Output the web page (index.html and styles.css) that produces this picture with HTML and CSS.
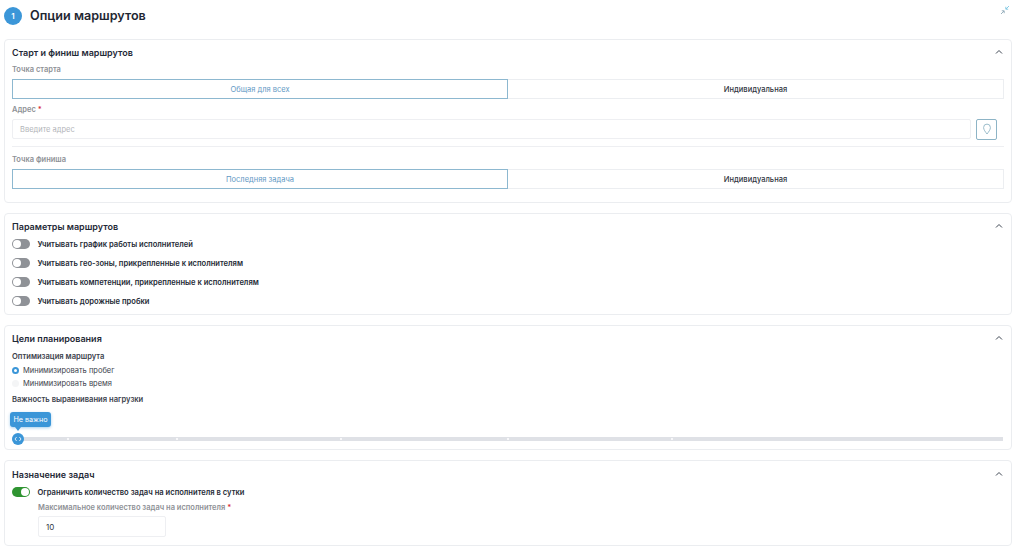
FILE: index.html
```html
<!DOCTYPE html>
<html lang="ru">
<head>
<meta charset="utf-8">
<title>Опции маршрутов</title>
<link rel="stylesheet" href="styles.css">
</head>
<body>
<header class="page-head">
  <span class="step">1</span>
  <h1 class="page-title">Опции маршрутов</h1>
  <svg class="collapse-all" width="10" height="10" viewBox="0 0 10 10" fill="none" stroke-width="0.9">
    <path d="M1 9L4 6M1.8 5.8H4.2V8.2" stroke="#8fa9b8"/>
    <path d="M9 1L6 4M8.2 4.2H5.8V1.8" stroke="#7cc6e2"/>
  </svg>
</header>

<section class="card card-start">
  <div class="card-head">
    <h2 class="card-title">Старт и финиш маршрутов</h2>
    <svg class="chev" width="8" height="6" viewBox="0 0 8 6" fill="none"><path d="M1 4.5L4 1.5L7 4.5" stroke="#3f4753" stroke-width="1"/></svg>
  </div>
  <div class="field-label">Точка старта</div>
  <div class="seg">
    <div class="seg-item active">Общая для всех</div>
    <div class="seg-item">Индивидуальная</div>
  </div>
  <div class="field-label addr-label">Адрес <span class="req">*</span></div>
  <div class="addr-row">
    <div class="input grow placeholder">Введите адрес</div>
    <button class="pin-btn" type="button">
      <svg width="10" height="12" viewBox="0 0 10 12" fill="none"><path d="M5 11C3.4 8.8 1.6 6.8 1.6 4.5A3.4 3.4 0 0 1 8.4 4.5C8.4 6.8 6.6 8.8 5 11Z" stroke="#8fb4c4" stroke-width="0.9"/></svg>
    </button>
  </div>
  <div class="divider"></div>
  <div class="field-label">Точка финиша</div>
  <div class="seg">
    <div class="seg-item active">Последняя задача</div>
    <div class="seg-item">Индивидуальная</div>
  </div>
</section>

<section class="card card-params">
  <div class="card-head">
    <h2 class="card-title">Параметры маршрутов</h2>
    <svg class="chev" width="8" height="6" viewBox="0 0 8 6" fill="none"><path d="M1 4.5L4 1.5L7 4.5" stroke="#3f4753" stroke-width="1"/></svg>
  </div>
  <div class="toggles">
    <div class="toggle-row"><span class="toggle"></span><span class="toggle-text">Учитывать график работы исполнителей</span></div>
    <div class="toggle-row"><span class="toggle"></span><span class="toggle-text">Учитывать гео-зоны, прикрепленные к исполнителям</span></div>
    <div class="toggle-row"><span class="toggle"></span><span class="toggle-text">Учитывать компетенции, прикрепленные к исполнителям</span></div>
    <div class="toggle-row"><span class="toggle"></span><span class="toggle-text">Учитывать дорожные пробки</span></div>
  </div>
</section>

<section class="card card-goals">
  <div class="card-head">
    <h2 class="card-title">Цели планирования</h2>
    <svg class="chev" width="8" height="6" viewBox="0 0 8 6" fill="none"><path d="M1 4.5L4 1.5L7 4.5" stroke="#3f4753" stroke-width="1"/></svg>
  </div>
  <div class="dark-label opt-label">Оптимизация маршрута</div>
  <div class="radios">
    <div class="radio-row"><span class="radio on"></span>Минимизировать пробег</div>
    <div class="radio-row"><span class="radio"></span>Минимизировать время</div>
  </div>
  <div class="dark-label balance-label">Важность выравнивания нагрузки</div>
  <div class="slider">
    <div class="track"></div>
    <span class="tick tick-1"></span>
    <span class="tick tick-2"></span>
    <span class="tick tick-3"></span>
    <span class="tick tick-4"></span>
    <span class="tick tick-5"></span>
    <span class="thumb">
      <svg width="8" height="6" viewBox="0 0 8 6" fill="none"><path d="M2.6 1L1 3L2.6 5M5.4 1L7 3L5.4 5" stroke="#fff" stroke-width="0.8"/></svg>
    </span>
    <span class="tip">Не важно</span>
  </div>
</section>

<section class="card card-tasks">
  <div class="card-head task-head">
    <h2 class="card-title">Назначение задач</h2>
    <svg class="chev" width="8" height="6" viewBox="0 0 8 6" fill="none"><path d="M1 4.5L4 1.5L7 4.5" stroke="#3f4753" stroke-width="1"/></svg>
  </div>
  <div class="toggle-row"><span class="toggle on"></span><span class="toggle-text">Ограничить количество задач на исполнителя в сутки</span></div>
  <div class="nested">
    <div class="field-label">Максимальное количество задач на исполнителя <span class="req">*</span></div>
    <div class="input num">10</div>
  </div>
</section>
</body>
</html>
```

FILE: styles.css
```css
* { box-sizing: border-box; }
html, body { margin: 0; padding: 0; }
body {
  width: 1024px;
  height: 550px;
  overflow: hidden;
  padding: 0 12px 0 4px;
  background: #fff;
  font-family: Inter, "Liberation Sans", sans-serif;
  color: #1f2733;
  display: flex;
  flex-direction: column;
}
.page-head {
  height: 39px;
  flex: none;
  display: flex;
  align-items: flex-start;
  padding-top: 7px;
  position: relative;
}
.step {
  width: 18px;
  height: 18px;
  border-radius: 50%;
  background: #3b96d8;
  color: #fff;
  font-size: 8px;
  font-weight: 600;
  display: flex;
  align-items: center;
  justify-content: center;
  flex: none;
}
.page-title {
  margin: 0 0 0 8px;
  font-size: 12.6px;
  line-height: 18px;
  font-weight: 600;
  color: #1f2733;
}
.collapse-all { position: absolute; right: 2px; top: 5px; }
.card {
  flex: none;
  border: 1px solid #ebedf0;
  border-radius: 4px;
  background: #fff;
  padding: 0 7px;
  margin-bottom: 10px;
}
.card-start { height: 164px; }
.card-params { height: 102px; }
.card-goals { height: 125px; }
.card-tasks { height: 86px; }
.card-head {
  height: 24px;
  display: flex;
  align-items: center;
  justify-content: space-between;
  padding: 1px 1px 0 0;
}
.task-head { height: 25px; }
.chev { margin-top: -1px; }
.card-title {
  margin: 0;
  font-size: 9px;
  font-weight: 600;
  color: #1f2a37;
}
.field-label {
  font-size: 7.5px;
  line-height: 12px;
  font-weight: 600;
  color: #8e9196;
}
.req { color: #d9363e; }
.seg {
  display: flex;
  margin-top: 3px;
  height: 20px;
}
.seg-item {
  flex: 1 1 50%;
  min-width: 0;
  display: flex;
  align-items: center;
  justify-content: center;
  font-size: 7.5px;
  font-weight: 500;
  color: #2f3540;
  border: 1px solid #eceef1;
  border-left-width: 0;
}
.seg-item.active {
  color: #5f98c4;
  font-weight: 400;
  border: 1px solid #8db8d0;
}
.addr-label { margin-top: 5px; }
.addr-row {
  display: flex;
  align-items: center;
  gap: 5px;
  margin-top: 3px;
  height: 20px;
}
.input {
  height: 20px;
  border: 1px solid #eeeff2;
  border-radius: 2px;
  font-size: 7.5px;
  display: flex;
  align-items: center;
  padding: 0 7px;
}
.grow { flex: 1; }
.placeholder { color: #b3b5ba; }
.pin-btn {
  width: 21px;
  height: 21px;
  margin-right: 7px;
  padding: 0;
  background: #fff;
  border: 1px solid #8db4c6;
  border-radius: 2px;
  display: flex;
  align-items: center;
  justify-content: center;
}
.divider {
  height: 1px;
  background: #eeeff2;
  margin: 7px 0 7px;
}
.toggles {
  display: flex;
  flex-direction: column;
  gap: 7px;
}
.toggle-row {
  height: 12px;
  display: flex;
  align-items: center;
  gap: 7.5px;
}
.toggle {
  width: 18px;
  height: 10px;
  border-radius: 5px;
  background: #8f9297;
  position: relative;
  flex: none;
}
.toggle::after {
  content: "";
  position: absolute;
  left: 1px;
  top: 1px;
  width: 8px;
  height: 8px;
  border-radius: 50%;
  background: #fff;
}
.toggle.on { background: #2f9431; }
.toggle.on::after { left: 9px; }
.toggle-text {
  font-size: 7.6px;
  font-weight: 600;
  color: #252b36;
}
.dark-label {
  font-size: 7.6px;
  line-height: 12px;
  font-weight: 600;
  color: #3c424c;
}
.opt-label { margin-top: 1px; }
.radios { margin-top: 1px; }
.radio-row {
  display: flex;
  align-items: center;
  gap: 4px;
  height: 13px;
  font-size: 7.5px;
  color: #3c424c;
}
.radio {
  width: 7px;
  height: 7px;
  border-radius: 50%;
  background: #f4f5f6;
  flex: none;
}
.radio.on {
  background: #fff;
  border: 2px solid #3b96d8;
}
.balance-label { margin-top: 4px; }
.slider {
  position: relative;
  height: 38px;
}
.track {
  position: absolute;
  left: 0;
  right: 1px;
  top: 31px;
  height: 4px;
  background: #dfe1e6;
}
.tick {
  position: absolute;
  top: 32px;
  width: 2px;
  height: 2px;
  background: #f7f7f9;
}
.tick-1 { left: 55px; }
.tick-2 { left: 164px; }
.tick-3 { left: 328px; }
.tick-4 { left: 495px; }
.tick-5 { left: 659px; }
.thumb {
  position: absolute;
  left: 0;
  top: 27px;
  width: 12px;
  height: 12px;
  border-radius: 50%;
  background: #3b96d8;
  display: flex;
  align-items: center;
  justify-content: center;
}
.tip {
  position: absolute;
  left: -2px;
  top: 6px;
  width: 41px;
  height: 15px;
  border-radius: 3px;
  background: #3b96d8;
  color: #fff;
  font-size: 7.2px;
  display: flex;
  align-items: center;
  justify-content: center;
  box-shadow: 0 1px 3px rgba(59, 150, 216, .45);
}
.tip::after {
  content: "";
  position: absolute;
  left: 5px;
  top: 15px;
  border: 3px solid transparent;
  border-top: 4px solid #3b96d8;
}
.nested {
  margin: 4px 0 0 26px;
}
.num {
  width: 128px;
  height: 21px;
  margin-top: 2px;
  font-size: 8px;
  color: #333a44;
}
```
